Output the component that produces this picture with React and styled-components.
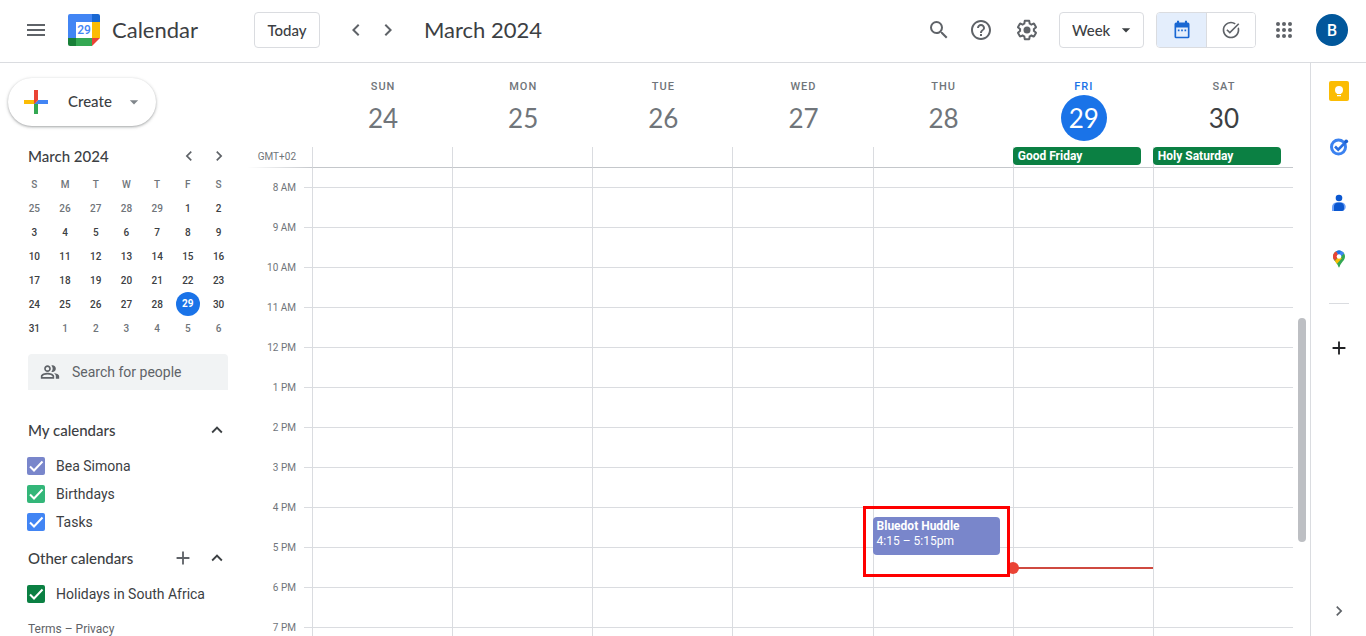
import React from "react";
import styled, { createGlobalStyle, css } from "styled-components";
import {
  MdMenu,
  MdChevronLeft,
  MdChevronRight,
  MdSearch,
  MdHelpOutline,
  MdArrowDropDown,
  MdAdd,
  MdExpandLess,
  MdOutlinePeopleAlt,
  MdTaskAlt,
} from "react-icons/md";

const brandFont = '"Lato", "Open Sans", sans-serif';
const HOUR = 40;
const FIRST_HOUR = 8;

const GlobalStyle = createGlobalStyle`
  *, *::before, *::after {
    box-sizing: border-box;
  }
  body {
    margin: 0;
    background: #fff;
    color: #3c4043;
    font-family: "Roboto", "Liberation Sans", sans-serif;
    font-size: 14px;
  }
  button, input, select {
    font: inherit;
    color: inherit;
  }
  h1, h2, h3, p {
    margin: 0;
    font-weight: 400;
  }
`;

const Page = styled.div`
  display: flex;
  flex-direction: column;
  height: 100vh;
  overflow: hidden;
`;
const Header = styled.header`
  display: flex;
  align-items: center;
  flex-shrink: 0;
  padding: 12px 18px 14px 16px;
  border-bottom: 1px solid #dadce0;
`;
const Brand = styled.div`
  display: flex;
  align-items: center;
  gap: 12px;
  width: 186px;
  margin-left: 12px;
`;
const Title = styled.h1`
  padding-bottom: 2px;
  font-family: ${brandFont};
  font-size: 22px;
`;
const Spacer = styled.div`
  flex: 1;
`;
const IconButton = styled.button`
  display: flex;
  align-items: center;
  justify-content: center;
  flex-shrink: 0;
  width: ${(props) => props.$size}px;
  height: ${(props) => props.$height || props.$size}px;
  padding: 0;
  border: 0;
  background: transparent;
  color: ${(props) => props.$color || "#5f6368"};
  cursor: pointer;
`;
const OutlineButton = styled.button`
  height: 36px;
  width: 66px;
  padding: 0;
  border: 1px solid #dadce0;
  border-radius: 4px;
  background: #fff;
  font-family: ${brandFont};
  font-size: 15px;
  font-weight: 500;
`;
const Arrows = styled.div`
  display: flex;
  margin: 0 20px;
`;
const Tools = styled.div`
  display: flex;
  margin-right: 8px;
`;
const ViewPicker = styled.label`
  display: grid;
  align-items: center;
  width: 85px;
  margin-right: 12px;
  svg {
    grid-area: 1 / 1;
    justify-self: end;
    margin-right: 8px;
    pointer-events: none;
  }
`;
const ViewSelect = styled.select`
  grid-area: 1 / 1;
  height: 36px;
  padding: 0 12px;
  appearance: none;
  border: 1px solid #dadce0;
  border-radius: 4px;
  background: #fff;
  font-family: ${brandFont};
  font-size: 15px;
  font-weight: 500;
`;
const Toggle = styled.div`
  display: flex;
  margin-right: 8px;
  border: 1px solid #dadce0;
  border-radius: 4px;
  overflow: hidden;
`;
const ToggleButton = styled.button`
  display: flex;
  align-items: center;
  justify-content: center;
  width: 49px;
  height: 34px;
  padding: 0;
  border: 0;
  background: ${(props) => (props.$active ? "#e4eefc" : "#fff")};
  color: ${(props) => (props.$active ? "#1967d2" : "#5f6368")};
  & + & {
    border-left: 1px solid #dadce0;
  }
`;
const Avatar = styled.button`
  width: 32px;
  height: 32px;
  margin-left: 12px;
  padding: 0;
  border: 0;
  border-radius: 50%;
  background: #01579b;
  color: #fff;
  font-size: 16px;
  font-weight: 500;
`;

const Body = styled.div`
  display: flex;
  flex: 1;
  min-height: 0;
`;

const Sidebar = styled.aside`
  display: flex;
  flex-direction: column;
  flex-shrink: 0;
  width: 248px;
  padding: 15px 20px 0 28px;
  & > * {
    flex-shrink: 0;
  }
`;
const CreateButton = styled.button`
  display: flex;
  align-items: center;
  align-self: flex-start;
  width: 148px;
  height: 48px;
  margin-left: -20px;
  padding: 0 12px 0 10px;
  border: 0;
  border-radius: 24px;
  background: #fff;
  box-shadow: 0 1px 2px rgba(60, 64, 67, 0.3), 0 1px 3px 1px rgba(60, 64, 67, 0.15);
  font-family: ${brandFont};
  font-size: 15px;
  font-weight: 500;
  span {
    flex: 1;
    margin-left: 14px;
    padding-bottom: 2px;
    text-align: left;
  }
`;
const MiniHead = styled.div`
  display: flex;
  align-items: center;
  height: 32px;
  margin-top: 14px;
  margin-right: -6px;
`;
const MiniTitle = styled.h3`
  flex: 1;
  font-family: ${brandFont};
  font-size: 15px;
  font-weight: 500;
`;
const MiniTable = styled.table`
  width: 215px;
  margin: 0 -6px 0 -9px;
  table-layout: fixed;
  border-collapse: collapse;
  font-size: 10px;
  text-align: center;
  th,
  td {
    height: 24px;
    padding: 0;
    font-weight: 500;
  }
  th {
    color: #70757a;
  }
`;
const MiniDay = styled.td`
  color: ${(props) => (props.$muted ? "#70757a" : "#3c4043")};
`;
const TodayDot = styled.span`
  display: block;
  width: 24px;
  margin: 0 auto;
  border-radius: 50%;
  background: #1a73e8;
  color: #fff;
  font-weight: 700;
  line-height: 24px;
`;
const PeopleSearch = styled.label`
  display: flex;
  align-items: center;
  gap: 12px;
  height: 36px;
  margin-top: 14px;
  padding: 0 12px;
  border-radius: 4px 4px 0 0;
  background: #f1f3f4;
  color: #5f6368;
  input {
    flex: 1;
    min-width: 0;
    padding: 0;
    border: 0;
    outline: 0;
    background: transparent;
  }
  input::placeholder {
    color: #5f6368;
    opacity: 1;
  }
`;
const SectionHead = styled.div`
  display: flex;
  align-items: center;
  height: 44px;
  margin-top: ${(props) => props.$gap || 0}px;
  margin-right: -6px;
`;
const CalendarList = styled.ul`
  margin: 0;
  padding: 0;
  list-style: none;
`;
const CalendarItem = styled.label`
  display: flex;
  align-items: center;
  gap: 11px;
  height: 28px;
  margin-left: -1px;
  white-space: nowrap;
`;
const Check = styled.span`
  display: grid;
  width: 18px;
  height: 18px;
  input {
    grid-area: 1 / 1;
    width: 18px;
    height: 18px;
    margin: 0;
    appearance: none;
    border-radius: 2px;
    background: ${(props) => props.$color};
  }
  svg {
    grid-area: 1 / 1;
    pointer-events: none;
  }
`;
const Legal = styled.p`
  margin-top: 12px;
  color: #5f6368;
  font-size: 12px;
  line-height: 18px;
  a {
    color: inherit;
    text-decoration: none;
  }
`;

const Main = styled.main`
  display: flex;
  flex-direction: column;
  flex: 1;
  min-width: 0;
`;
const WeekHead = styled.div`
  display: grid;
  grid-template-columns: 64px repeat(7, 1fr);
  flex-shrink: 0;
  padding-right: 17px;
`;
const DayHead = styled.div`
  display: flex;
  flex-direction: column;
  align-items: center;
  height: 84px;
  padding: 15px 0 0 2px;
  color: ${(props) => (props.$today ? "#1a73e8" : "#70757a")};
`;
const DayName = styled.span`
  font-size: 11px;
  font-weight: 500;
  line-height: 17px;
  letter-spacing: 1px;
`;
const DayNumber = styled.span`
  width: 46px;
  height: 46px;
  border-radius: 50%;
  font-family: ${brandFont};
  font-size: 26px;
  line-height: 46px;
  text-align: center;
  ${(props) =>
    props.$future &&
    css`
      color: #3c4043;
    `}
  ${(props) =>
    props.$today &&
    css`
      background: #1a73e8;
      color: #fff;
    `}
`;
const Zone = styled.div`
  height: 21px;
  padding-right: 16px;
  border-bottom: 1px solid;
  border-image: linear-gradient(to right, #fff, #c4c7cb) 1;
  color: #70757a;
  font-size: 10px;
  line-height: 19px;
  text-align: right;
`;
const AllDay = styled.div`
  height: 21px;
  border-left: 1px solid #dadce0;
  border-bottom: 1px solid #c4c7cb;
`;
const AllDayEvent = styled.div`
  height: 18px;
  margin: 0 12px 0 -1px;
  padding: 0 5px;
  border-radius: 4px;
  background: #0b8043;
  color: #fff;
  font-size: 12px;
  font-weight: 700;
  line-height: 18px;
  white-space: nowrap;
`;
const GridArea = styled.div`
  display: flex;
  flex: 1;
  min-height: 0;
  overflow: hidden;
`;
const Hours = styled.div`
  width: 48px;
  color: #70757a;
  font-size: 10px;
  line-height: ${HOUR}px;
  text-align: right;
`;
const Days = styled.div`
  display: grid;
  grid-template-columns: 16px repeat(7, 1fr);
  flex: 1;
  min-width: 0;
`;
const Stub = styled.div`
  padding-left: 8px;
`;
const DayColumn = styled.div`
  position: relative;
  border-left: 1px solid #dadce0;
`;
const HourCell = styled.div`
  height: ${HOUR}px;
  border-bottom: 1px solid #dadce0;
  &:first-child {
    height: ${HOUR / 2}px;
  }
`;
const Event = styled.div`
  position: absolute;
  left: -1px;
  right: 13px;
  height: 38px;
  padding: 2px 4px;
  border-radius: 4px;
  background: #7986cb;
  color: #fff;
  font-size: 12px;
  line-height: 15px;
  white-space: nowrap;
  strong {
    display: block;
    font-weight: 700;
  }
`;
const Highlight = styled.div`
  position: absolute;
  z-index: 2;
  left: -11px;
  right: 3px;
  height: 71px;
  border: 3px solid #fe0000;
`;
const NowLine = styled.div`
  position: absolute;
  z-index: 1;
  left: 0;
  right: 0;
  height: 2px;
  background: #cf4a40;
  &::before {
    content: "";
    position: absolute;
    top: -5px;
    left: -7px;
    width: 12px;
    height: 12px;
    border-radius: 50%;
    background: #ea4335;
  }
`;
const Track = styled.div`
  width: 17px;
  padding: 150px 4px 0 5px;
`;
const Thumb = styled.div`
  height: 224px;
  border-radius: 4px;
  background: #bdbfc3;
`;

const Rail = styled.aside`
  display: flex;
  flex-direction: column;
  flex-shrink: 0;
  width: 56px;
  border-left: 1px solid #dadce0;
`;
const RailDivider = styled.hr`
  width: 20px;
  height: 1px;
  margin: 16px auto;
  border: 0;
  background: #dadce0;
`;

const days = [
  { name: "SUN", date: 24 },
  { name: "MON", date: 25 },
  { name: "TUE", date: 26 },
  { name: "WED", date: 27 },
  { name: "THU", date: 28, event: { title: "Bluedot Huddle", time: "4:15 – 5:15pm", start: 16.25 } },
  { name: "FRI", date: 29, today: true, allDay: "Good Friday", now: 17.5 },
  { name: "SAT", date: 30, future: true, allDay: "Holy Saturday" },
];
const hours = [
  "8 AM", "9 AM", "10 AM", "11 AM", "12 PM", "1 PM",
  "2 PM", "3 PM", "4 PM", "5 PM", "6 PM", "7 PM",
];
const weeks = [
  [25, 26, 27, 28, 29, 1, 2],
  [3, 4, 5, 6, 7, 8, 9],
  [10, 11, 12, 13, 14, 15, 16],
  [17, 18, 19, 20, 21, 22, 23],
  [24, 25, 26, 27, 28, 29, 30],
  [31, 1, 2, 3, 4, 5, 6],
];
const myCalendars = [
  { name: "Bea Simona", color: "#7986cb" },
  { name: "Birthdays", color: "#33b679" },
  { name: "Tasks", color: "#4285f4" },
];
const otherCalendars = [{ name: "Holidays in South Africa", color: "#0b8043" }];

const offset = (hour) => (hour - FIRST_HOUR) * HOUR + HOUR / 2 - 1;

function isMuted(week, date) {
  return (week === 0 && date > 20) || (week === 5 && date < 20);
}

function CalendarLogo() {
  return (
    <svg width="32" height="32" viewBox="0 0 32 32" aria-hidden="true">
      <path d="M2 0h22v8H8v16H0V2a2 2 0 0 1 2-2z" fill="#4285f4" />
      <path d="M24 0h6a2 2 0 0 1 2 2v6h-8z" fill="#1967d2" />
      <path d="M24 8h8v16h-8z" fill="#fbbc04" />
      <path d="M8 24h16v8H8z" fill="#34a853" />
      <path d="M0 24h8v8H2a2 2 0 0 1-2-2z" fill="#188038" />
      <path d="M24 24h8l-8 8z" fill="#ea4335" />
      <path d="M8 8h16v16H8z" fill="#fff" />
      <text x="16" y="20" textAnchor="middle" fontFamily="Roboto, sans-serif" fontSize="12" fontWeight="500" fill="#4285f4">
        29
      </text>
    </svg>
  );
}

function CreatePlus() {
  return (
    <svg width="36" height="36" viewBox="0 0 36 36" aria-hidden="true">
      <path d="M16 16v14h4V20z" fill="#34a853" />
      <path d="M30 16H20l-4 4h14z" fill="#4285f4" />
      <path d="M6 16v4h10l4-4z" fill="#fbbc05" />
      <path d="M20 16V6h-4v14z" fill="#ea4335" />
    </svg>
  );
}

function GearIcon() {
  return (
    <svg width="24" height="24" viewBox="0 0 24 24" fill="currentColor" aria-hidden="true">
      <path d="M13.85 22.25h-3.7c-.74 0-1.36-.54-1.45-1.27l-.27-1.89c-.27-.14-.53-.29-.79-.46l-1.8.72c-.7.26-1.47-.03-1.81-.65L2.2 15.53c-.35-.66-.2-1.44.36-1.88l1.53-1.19c-.01-.15-.02-.3-.02-.46 0-.15.01-.31.02-.46l-1.52-1.19c-.59-.45-.74-1.26-.37-1.88l1.85-3.19c.34-.62 1.11-.9 1.79-.63l1.81.73c.26-.17.52-.32.78-.46l.27-1.91c.09-.7.71-1.25 1.44-1.25h3.7c.74 0 1.36.54 1.45 1.27l.27 1.89c.27.14.53.29.79.46l1.8-.72c.71-.26 1.48.03 1.82.65l1.84 3.18c.36.66.2 1.44-.36 1.88l-1.52 1.19c.01.15.02.3.02.46s-.01.31-.02.46l1.52 1.19c.56.45.72 1.23.37 1.86l-1.86 3.22c-.34.62-1.11.9-1.8.63l-1.8-.72c-.26.17-.52.32-.78.46l-.27 1.91c-.1.68-.72 1.22-1.46 1.22zm-3.23-2h2.76l.37-2.55.53-.22c.44-.18.88-.44 1.34-.78l.45-.34 2.38.96 1.38-2.4-2.03-1.58.07-.56c.03-.26.06-.51.06-.78s-.03-.53-.06-.78l-.07-.56 2.03-1.58-1.39-2.4-2.39.96-.45-.35c-.42-.32-.87-.58-1.33-.77l-.52-.22-.37-2.55h-2.76l-.37 2.55-.53.21c-.44.19-.88.44-1.34.79l-.45.33-2.38-.95-1.39 2.39 2.03 1.58-.07.56a7 7 0 0 0-.06.79c0 .26.02.53.06.78l.07.56-2.03 1.58 1.38 2.4 2.39-.96.45.35c.43.33.86.58 1.33.77l.53.22.38 2.55z" />
      <circle cx="12" cy="12" r="3.5" />
    </svg>
  );
}

function AppsIcon() {
  return (
    <svg width="24" height="24" viewBox="0 0 24 24" fill="currentColor" aria-hidden="true">
      {[6, 12, 18].map((y) => [6, 12, 18].map((x) => <circle key={`${x}-${y}`} cx={x} cy={y} r="2" />))}
    </svg>
  );
}

function WeekIcon() {
  return (
    <svg width="20" height="20" viewBox="0 0 24 24" fill="currentColor" aria-hidden="true">
      <path d="M19 3h-1V1h-2.500v2h-7V1H6v2H5a2 2 0 0 0-2 2v15a2 2 0 0 0 2 2h14a2 2 0 0 0 2-2V5a2 2 0 0 0-2-2zm0 17H5V9h14z" />
      <path d="M7 11.500h2v2H7zM11 11.500h2v2h-2zM15 11.500h2v2h-2z" />
    </svg>
  );
}

function KeepIcon() {
  return (
    <svg width="20" height="20" viewBox="0 0 20 20" aria-hidden="true">
      <rect width="20" height="20" rx="2" fill="#fbbc04" />
      <circle cx="10" cy="9" r="4" fill="#fff" />
      <path d="M8 11h4v2H8zM8 14h4v1.300H8z" fill="#fff" />
    </svg>
  );
}

function TasksIcon() {
  return (
    <svg width="20" height="20" viewBox="0 0 20 20" fill="none" aria-hidden="true">
      <circle cx="9.500" cy="10" r="7" stroke="#3b82f0" strokeWidth="3" />
      <path d="M6 9.500l3.200 3.200 7.600-7.700" stroke="#2a6fe0" strokeWidth="2.600" />
      <circle cx="17.200" cy="4.300" r="1.900" fill="#1a5fd0" />
    </svg>
  );
}

function ContactsIcon() {
  return (
    <svg width="20" height="20" viewBox="0 0 20 20" aria-hidden="true">
      <circle cx="10" cy="5" r="3.300" fill="#0b57d0" />
      <path d="M3 18v-4a4.500 4.500 0 0 1 4.500-4.500h5a4.250 4.250 0 0 1 0 8.500z" fill="#6ea1f7" />
      <path d="M5 18v-4a4 4 0 0 1 4-4.500h2a4 4 0 0 1 4 4.500v2a2 2 0 0 1-2 2z" fill="#0b57d0" />
    </svg>
  );
}

function MapsIcon() {
  return (
    <svg width="20" height="20" viewBox="0 0 20 20" aria-hidden="true">
      <clipPath id="pin">
        <path d="M10 1.500a6 6 0 0 0-6 6c0 4 4.300 6 5.400 10.300.2.900 1 .9 1.200 0C11.700 13.500 16 11.500 16 7.500a6 6 0 0 0-6-6z" />
      </clipPath>
      <g clipPath="url(#pin)">
        <path d="M0 0h20v20H0z" fill="#34a853" />
        <path d="M5 0h12v3L10 9z" fill="#4285f4" />
        <path d="M0 0h6l4 7.500-5 4.500-5-2z" fill="#ea4335" />
        <path d="M6.500 1L10 6 13 0z" fill="#1a73e8" />
        <path d="M10 7.500L4 14l3 2 6-7z" fill="#fbbc04" />
      </g>
      <circle cx="10" cy="7.500" r="2.300" fill="#fff" />
    </svg>
  );
}

function CalendarRow({ name, color }) {
  return (
    <li>
      <CalendarItem>
        <Check $color={color}>
          <input type="checkbox" defaultChecked />
          <svg width="18" height="18" viewBox="0 0 18 18" fill="none" aria-hidden="true">
            <path d="M3 9.500l4 4 8.500-9" stroke="#fff" strokeWidth="2" />
          </svg>
        </Check>
        {name}
      </CalendarItem>
    </li>
  );
}

function TopBar() {
  return (
    <Header>
      <IconButton $size={40} $height={36} aria-label="Main menu">
        <MdMenu size={24} />
      </IconButton>
      <Brand>
        <CalendarLogo />
        <Title>Calendar</Title>
      </Brand>
      <OutlineButton>Today</OutlineButton>
      <Arrows>
        <IconButton $size={32} aria-label="Previous week">
          <MdChevronLeft size={24} />
        </IconButton>
        <IconButton $size={32} aria-label="Next week">
          <MdChevronRight size={24} />
        </IconButton>
      </Arrows>
      <Title as="h2">March 2024</Title>
      <Spacer />
      <Tools>
        <IconButton $size={40} $height={36} aria-label="Search">
          <MdSearch size={24} />
        </IconButton>
        <IconButton $size={44} $height={36} aria-label="Support">
          <MdHelpOutline size={24} />
        </IconButton>
        <IconButton $size={48} $height={36} aria-label="Settings">
          <GearIcon />
        </IconButton>
      </Tools>
      <ViewPicker>
        <ViewSelect aria-label="View" defaultValue="Week">
          <option>Day</option>
          <option>Week</option>
          <option>Month</option>
        </ViewSelect>
        <MdArrowDropDown size={20} />
      </ViewPicker>
      <Toggle>
        <ToggleButton $active aria-label="Calendar">
          <WeekIcon />
        </ToggleButton>
        <ToggleButton aria-label="Tasks">
          <MdTaskAlt size={20} />
        </ToggleButton>
      </Toggle>
      <IconButton $size={40} $height={36} aria-label="Apps">
        <AppsIcon />
      </IconButton>
      <Avatar aria-label="Account">B</Avatar>
    </Header>
  );
}

function MiniCalendar() {
  return (
    <>
      <MiniHead>
        <MiniTitle>March 2024</MiniTitle>
        <IconButton $size={30} aria-label="Previous month">
          <MdChevronLeft size={20} />
        </IconButton>
        <IconButton $size={30} aria-label="Next month">
          <MdChevronRight size={20} />
        </IconButton>
      </MiniHead>
      <MiniTable>
        <thead>
          <tr>
            {["S", "M", "T", "W", "T", "F", "S"].map((letter, i) => (
              <th key={i}>{letter}</th>
            ))}
          </tr>
        </thead>
        <tbody>
          {weeks.map((week, w) => (
            <tr key={w}>
              {week.map((date) => (
                <MiniDay key={date} $muted={isMuted(w, date)}>
                  {w === 4 && date === 29 ? <TodayDot>{date}</TodayDot> : date}
                </MiniDay>
              ))}
            </tr>
          ))}
        </tbody>
      </MiniTable>
    </>
  );
}

function SidePanel() {
  return (
    <Sidebar>
      <CreateButton>
        <CreatePlus />
        <span>Create</span>
        <MdArrowDropDown size={20} color="#80868b" />
      </CreateButton>
      <MiniCalendar />
      <PeopleSearch>
        <MdOutlinePeopleAlt size={20} />
        <input type="text" placeholder="Search for people" aria-label="Search for people" />
      </PeopleSearch>
      <SectionHead $gap={18}>
        <MiniTitle>My calendars</MiniTitle>
        <IconButton $size={34} $color="#3c4043" aria-label="Collapse my calendars">
          <MdExpandLess size={22} />
        </IconButton>
      </SectionHead>
      <CalendarList>
        {myCalendars.map((item) => (
          <CalendarRow key={item.name} {...item} />
        ))}
      </CalendarList>
      <SectionHead>
        <MiniTitle>Other calendars</MiniTitle>
        <IconButton $size={34} aria-label="Add other calendars">
          <MdAdd size={22} />
        </IconButton>
        <IconButton $size={34} $color="#3c4043" aria-label="Collapse other calendars">
          <MdExpandLess size={22} />
        </IconButton>
      </SectionHead>
      <CalendarList>
        {otherCalendars.map((item) => (
          <CalendarRow key={item.name} {...item} />
        ))}
      </CalendarList>
      <Legal>
        <a href="#terms">Terms</a> – <a href="#privacy">Privacy</a>
      </Legal>
    </Sidebar>
  );
}

function WeekView() {
  return (
    <Main>
      <WeekHead>
        <div />
        {days.map((day) => (
          <DayHead key={day.name} $today={day.today}>
            <DayName>{day.name}</DayName>
            <DayNumber $today={day.today} $future={day.future}>
              {day.date}
            </DayNumber>
          </DayHead>
        ))}
        <Zone>GMT+02</Zone>
        {days.map((day) => (
          <AllDay key={day.name}>{day.allDay && <AllDayEvent>{day.allDay}</AllDayEvent>}</AllDay>
        ))}
      </WeekHead>
      <GridArea>
        <Hours>
          {hours.map((hour) => (
            <div key={hour}>{hour}</div>
          ))}
        </Hours>
        <Days>
          <Stub>
            {hours.map((hour) => (
              <HourCell key={hour} />
            ))}
          </Stub>
          {days.map((day) => (
            <DayColumn key={day.name}>
              {hours.map((hour) => (
                <HourCell key={hour} />
              ))}
              {day.event && (
                <>
                  <Event style={{ top: offset(day.event.start) }}>
                    <strong>{day.event.title}</strong>
                    {day.event.time}
                  </Event>
                  <Highlight style={{ top: offset(day.event.start) - 11 }} />
                </>
              )}
              {day.now && <NowLine style={{ top: offset(day.now) }} />}
            </DayColumn>
          ))}
        </Days>
        <Track>
          <Thumb />
        </Track>
      </GridArea>
    </Main>
  );
}

function AppRail() {
  return (
    <Rail>
      <IconButton $size={56} aria-label="Keep">
        <KeepIcon />
      </IconButton>
      <IconButton $size={56} aria-label="Tasks">
        <TasksIcon />
      </IconButton>
      <IconButton $size={56} aria-label="Contacts">
        <ContactsIcon />
      </IconButton>
      <IconButton $size={56} aria-label="Maps">
        <MapsIcon />
      </IconButton>
      <RailDivider />
      <IconButton $size={56} $color="#202124" aria-label="Get add-ons">
        <MdAdd size={22} />
      </IconButton>
      <Spacer />
      <IconButton $size={56} $height={50} aria-label="Hide side panel">
        <MdChevronRight size={20} />
      </IconButton>
    </Rail>
  );
}

function App() {
  return (
    <Page>
      <GlobalStyle />
      <TopBar />
      <Body>
        <SidePanel />
        <WeekView />
        <AppRail />
      </Body>
    </Page>
  );
}

export default App;
